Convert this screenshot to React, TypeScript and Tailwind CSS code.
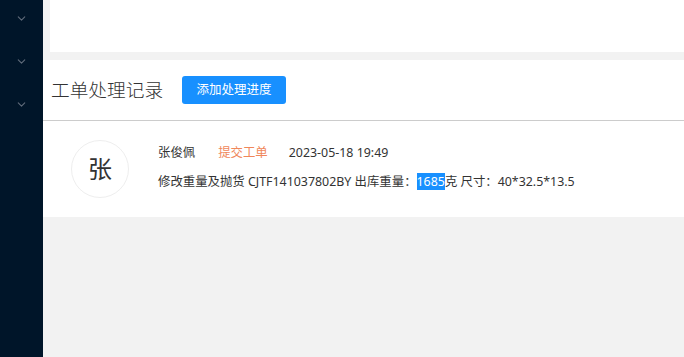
import { ChevronDown } from 'lucide-react';

const font = { fontFamily: '"Noto Sans", "Noto Sans CJK SC", sans-serif' };

export default function App() {
  return (
    <div className="flex h-[357px] w-[684px] overflow-hidden bg-[#f2f2f2]" style={font}>
      {/* sidebar */}
      <aside className="w-[43px] shrink-0 bg-[#001529] flex flex-col items-center pt-[12px] gap-[30px]">
        {[0, 1, 2].map((i) => (
          <ChevronDown key={i} size={13} strokeWidth={2} className="text-[#5f6b7a]" />
        ))}
      </aside>

      <main className="flex-1 flex flex-col">
        <div className="h-[52px] ml-[7px] bg-white shrink-0"></div>
        <div className="h-[8px] shrink-0"></div>

        <section className="bg-white">
          <div className="h-[61px] flex items-center pl-[8px] border-b border-[#cccccc]">
            <h2 className="text-[18.7px] font-light text-[#333] leading-none">工单处理记录</h2>
            <button className="ml-[19px] h-[28px] w-[104px] rounded-[3px] bg-[#1890ff] text-white text-[12.5px]">
              添加处理进度
            </button>
          </div>

          <div className="flex items-center h-[96px] pl-[28px]">
            <div className="w-[58px] h-[58px] rounded-full border border-[#eeeeee] flex items-center justify-center text-[24px] text-[#333]">
              张
            </div>
            <div className="ml-[29px] text-[12.4px] text-[#333] flex flex-col gap-[10px] -mt-[4px]">
              <div className="flex items-center leading-[19px]">
                <span>张俊佩</span>
                <span className="ml-[23px] text-[#f0875a]">提交工单</span>
                <span className="ml-[21px]">2023-05-18 19:49</span>
              </div>
              <div className="leading-[19px]">
                修改重量及抛货 CJTF141037802BY 出库重量：
                <span className="bg-[#1890ff] text-white">1685</span>克 尺寸：40*32.5*13.5
              </div>
            </div>
          </div>
        </section>
      </main>
    </div>
  );
}
